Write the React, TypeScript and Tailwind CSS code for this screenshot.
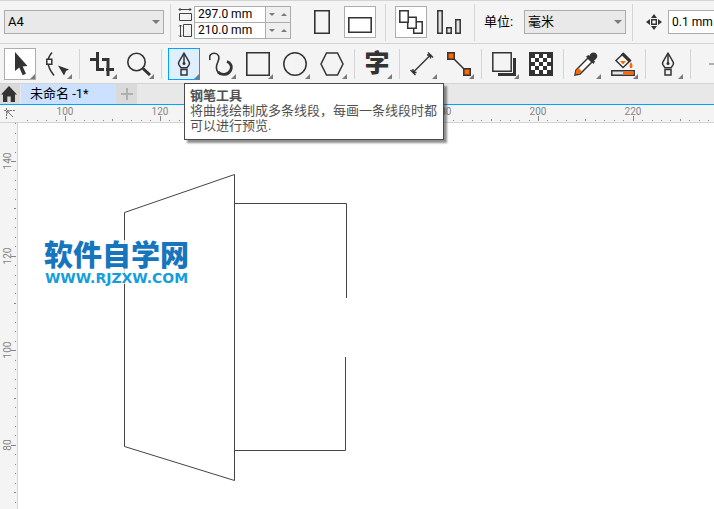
import React, { useEffect, useState } from "react";

const ink = "#333333";
const orange = "#ff6600";

function Separator({ wide = false }: { wide?: boolean }) {
    return <span className={`w-px h-[37px] flex-none bg-[#d4d4d4] ${wide ? "mx-[3px]" : ""}`} />;
}

function ToolSeparator() {
    return <span className="w-px h-[30px] mx-px flex-none bg-[#d4d4d4]" />;
}

type ToolProps = {
    label: string;
    state?: "idle" | "selected" | "hover";
    flyout?: boolean;
    children: React.ReactNode;
};

const toolStyle = {
    idle: "border-transparent",
    selected: "border-[#adadad] bg-white",
    hover: "border-[#00a2ff] bg-[#e0efff]",
};

function Tool({ label, state = "idle", flyout = true, children }: ToolProps) {
    return (
        <button
            type="button"
            aria-label={label}
            className={`relative w-8 h-8 flex-none flex items-center justify-center border ${toolStyle[state]}`}
        >
            {children}
            {flyout && (
                <svg className="absolute right-0 bottom-0 w-[5px] h-[5px]" viewBox="0 0 5 5">
                    <path d="M5 0V5H0Z" fill="#7a7a7a" />
                </svg>
            )}
        </button>
    );
}

function Icon({ children }: { children: React.ReactNode }) {
    return (
        <svg className="w-6 h-6 flex-none" viewBox="0 0 24 24" fill="none" stroke={ink} strokeWidth="2">
            {children}
        </svg>
    );
}

function PenIcon() {
    return (
        <Icon>
            <path d="M12 1L6.8 10.2Q6.2 11.5 7 12.8L9 15.8H15L17 12.8Q17.8 11.5 17.2 10.2Z" strokeWidth="1.5" strokeLinejoin="round" />
            <path d="M12 2V12" strokeWidth="1.5" />
            <circle cx="12" cy="11.5" r="1.5" fill={ink} stroke="none" />
            <path d="M9 17.5H15V23H9Z" strokeWidth="1.5" />
        </Icon>
    );
}

function SelectBox({ id, value, className }: { id: string; value: string; className: string }) {
    return (
        <span className={`relative flex-none h-6 ${className}`}>
            <select
                id={id}
                aria-label={id}
                defaultValue={value}
                className="block w-full h-full appearance-none border border-[#adadad] bg-[#e9e9e9] pl-[3px] pr-5 text-[13px] leading-5 text-black"
            >
                <option>{value}</option>
            </select>
            <svg className="absolute right-1 top-[10px] w-2 h-1 pointer-events-none" viewBox="0 0 8 4">
                <path d="M0 0H8L4 4Z" fill="#7a7a7a" />
            </svg>
        </span>
    );
}

function SizeInput({ label, value }: { label: string; value: string }) {
    return (
        <div className="flex h-[15px]">
            <input
                aria-label={label}
                defaultValue={value}
                className="w-[70px] h-full bg-white pl-[3px] text-[12px] leading-[15px] text-black outline-none"
            />
            <div className="flex border-l border-[#adadad] bg-[#efefef]">
                <button type="button" aria-label={`Decrease ${label}`} className="w-3 flex items-center justify-center">
                    <svg className="w-[6px] h-[3px]" viewBox="0 0 6 3"><path d="M0 0H6L3 3Z" fill="#7a7a7a" /></svg>
                </button>
                <button type="button" aria-label={`Increase ${label}`} className="w-3 flex items-center justify-center">
                    <svg className="w-[6px] h-[3px]" viewBox="0 0 6 3"><path d="M0 3H6L3 0Z" fill="#7a7a7a" /></svg>
                </button>
            </div>
        </div>
    );
}

function PropertyBar() {
    return (
        <div className="flex items-center gap-[6px] h-11 pl-1 border-t border-b border-[#d4d4d4] overflow-hidden">
            <SelectBox id="page-size" value="A4" className="w-40" />
            <Separator />
            <div className="flex flex-none gap-px">
                <svg className="w-4 h-[33px]" viewBox="0 0 16 33" fill="none" stroke="#444444">
                    <path d="M2 3.5H14M3.5 2L2 3.5L3.5 5M12.5 2L14 3.5L12.5 5" />
                    <path d="M2.5 7.5H14.5V14.5H2.5Z" />
                    <path d="M3.5 19V31M2 20.5L3.5 19L5 20.5M2 29.5L3.5 31L5 29.5M6.5 18.5H14.5V30.5H6.5Z" />
                </svg>
                <div className="border border-[#adadad]">
                    <SizeInput label="width" value="297.0 mm" />
                    <div className="h-px bg-[#adadad]" />
                    <SizeInput label="height" value="210.0 mm" />
                </div>
            </div>
            <div className="flex flex-none gap-[6px] pl-[9px]">
                <Tool label="纵向" flyout={false}>
                    <Icon><path d="M4.8 .8H19.2V23.2H4.8Z" strokeWidth="1.6" /></Icon>
                </Tool>
                <Tool label="横向" state="selected" flyout={false}>
                    <Icon><path d="M.8 7.8H23.2V22.2H.8Z" strokeWidth="1.6" /></Icon>
                </Tool>
            </div>
            <Separator wide />
            <Tool label="所有页面" state="selected" flyout={false}>
                <Icon>
                    <g strokeWidth="1.5" fill="white">
                        <path d="M14.7 11.7H23.2V23.2H14.7Z" />
                        <path d="M8.7 7.2H17.2V18.2H8.7Z" />
                        <path d="M.8 .8H9.2V12.2H.8Z" />
                    </g>
                </Icon>
            </Tool>
            <Tool label="当前页面" flyout={false}>
                <Icon>
                    <g strokeWidth="1.5" fill="#e4e4e4">
                        <path d="M.8 .8H5.2V23.2H.8Z" />
                        <path d="M9.8 17.8H14.2V23.2H9.8Z" />
                        <path d="M18.8 9.8H23.2V23.2H18.8Z" />
                    </g>
                </Icon>
            </Tool>
            <Separator wide />
            <label htmlFor="units" className="w-[34px] flex-none text-[13px] text-black whitespace-nowrap">单位:</label>
            <SelectBox id="units" value="毫米" className="w-[102px]" />
            <Separator />
            <svg className="w-4 h-4 ml-[7px] flex-none" viewBox="0 0 16 16" fill={ink}>
                <path d="M8 0L11 4H5ZM8 16L11 12H5ZM0 8L4 5V11ZM16 8L12 5V11Z" />
                <path d="M5.7 5.7H10.3V10.3H5.7Z" fill="white" stroke={ink} strokeWidth="1.4" />
            </svg>
            <input
                aria-label="微调距离"
                defaultValue="0.1 mm"
                className="w-20 h-6 flex-none border border-[#adadad] bg-white pl-[3px] text-[12px] text-black"
            />
        </div>
    );
}

function Toolbox() {
    return (
        <div className="flex items-center gap-[5px] h-10 pl-1 border-b border-[#d4d4d4] overflow-hidden">
            <Tool label="选择" state="selected">
                <Icon><path d="M7 0V19L11.3 15.5L14.7 23.2L18 21.8L14.7 14.5L19.5 14Z" fill={ink} stroke="none" /></Icon>
            </Tool>
            <Tool label="形状">
                <Icon>
                    <path d="M7 .5Q3 5 3 10Q3 16 9 23.5" strokeWidth="1.5" />
                    <path d="M1.8 7.2H6.8V12.2H1.8Z" fill="white" strokeWidth="1.5" />
                    <path d="M13 13.5L24 17.5L21 19L19 23.5Z" fill={ink} stroke="none" />
                </Icon>
            </Tool>
            <ToolSeparator />
            <Tool label="裁剪">
                <Icon><path d="M0 7.5H9M12 7.5H18V16M7.5 0V17.5H14M16 17.5H24M18 19V24" strokeWidth="3" /></Icon>
            </Tool>
            <Tool label="缩放">
                <Icon>
                    <circle cx="9.5" cy="10" r="8.7" strokeWidth="1.6" />
                    <path d="M16 16.5L23 23" strokeWidth="3" />
                </Icon>
            </Tool>
            <ToolSeparator />
            <Tool label="钢笔工具" state="hover"><PenIcon /></Tool>
            <Tool label="B 样条">
                <Icon>
                    <path d="M1 8C-.5 3 2.5 1 5.5 1.2C9.5 1.5 11 5 9 9.5C7 14 6.5 18 9.5 20.5" strokeWidth="1.6" />
                    <path d="M9 20C12 23.5 19 23.3 21.5 18.5C23.5 14.5 21.5 10.5 18 9.5" strokeWidth="2.8" />
                </Icon>
            </Tool>
            <Tool label="矩形"><Icon><path d="M.8 .8H23.2V23.2H.8Z" strokeWidth="1.6" /></Icon></Tool>
            <Tool label="椭圆形"><Icon><circle cx="12" cy="12" r="11.2" strokeWidth="1.5" /></Icon></Tool>
            <Tool label="多边形"><Icon><path d="M6.5 1H17.5L23 12L17.5 23H6.5L1 12Z" strokeWidth="1.5" /></Icon></Tool>
            <ToolSeparator />
            <Tool label="文本">
                <span className="text-[25px] leading-6 pt-px font-black text-[#333333]">字</span>
            </Tool>
            <ToolSeparator />
            <Tool label="平行度量">
                <Icon><path d="M3 20.5L20.5 3M.5 18L5.5 23M18 .5L23 5.5M3 17V20.5H6.5M17 3H20.5V6.5" strokeWidth="1.4" /></Icon>
            </Tool>
            <Tool label="连接器">
                <Icon>
                    <path d="M4 4L20 20" strokeWidth="1.6" />
                    <path d="M.8 .8H7.2V7.2H.8ZM16.8 16.8H23.2V23.2H16.8Z" fill={orange} strokeWidth="1.5" />
                </Icon>
            </Tool>
            <ToolSeparator />
            <Tool label="阴影">
                <Icon>
                    <path d="M6 22.5H22.5V6" strokeWidth="3" />
                    <path d="M.8 .8H19.2V19.2H.8Z" fill="#f4f4f4" strokeWidth="1.5" />
                </Icon>
            </Tool>
            <Tool label="透明度" flyout={false}>
                <Icon>
                    <path d="M0 0H24V24H0Z" fill={ink} stroke="none" />
                    {[0, 1, 2, 3, 4].map((row) =>
                        [0, 1, 2, 3, 4].map((col) =>
                            (row + col) % 2 === 1 ? (
                                <rect key={`${row}-${col}`} x={2 + col * 4} y={2 + row * 4} width="4" height="4" fill="white" stroke="none" />
                            ) : null
                        )
                    )}
                </Icon>
            </Tool>
            <ToolSeparator />
            <Tool label="颜色滴管">
                <Icon>
                    <path d="M14 6L2 18L1 23L6 22L18 10Z" fill="white" strokeWidth="1.5" />
                    <path d="M2 18.5L4.5 16L8 19.5L5.5 21.5L1.5 22.5Z" fill={orange} stroke="none" />
                    <path d="M12 4.5L14.5 3L15.5 4C16 1 19-.5 21.5 1C24.5 3 23.5 7 20 8.5L21 9.5L19.5 12Z" fill={ink} stroke="none" />
                </Icon>
            </Tool>
            <Tool label="交互式填充">
                <Icon>
                    <path d="M12.5 1.5L19.5 8.5L12 15.5L5 8.5Z" fill="white" strokeWidth="1.5" />
                    <path d="M11 1.5L19 9.5" strokeWidth="3" />
                    <path d="M9 9H15L12 12.5Z" fill={orange} stroke="none" />
                    <path d="M20 10C21.5 12 22 13.5 21 16H19C18 13.5 19 12 20 10Z" fill={orange} stroke="none" />
                    <path d="M.8 18.8H23.2V23.2H.8Z" fill="#e4e4e4" strokeWidth="1.5" />
                    <path d="M12 19.5H22.5V22.5H12Z" fill={orange} stroke="none" />
                </Icon>
            </Tool>
            <ToolSeparator />
            <Tool label="轮廓笔"><PenIcon /></Tool>
            <ToolSeparator />
            <button type="button" aria-label="自定义" className="w-9 h-8 flex-none flex items-center justify-center">
                <svg className="w-3 h-3" viewBox="0 0 12 12"><path d="M0 6H12M6 0V12" stroke="#b0b0b0" strokeWidth="2" /></svg>
            </button>
        </div>
    );
}

function DocumentTabs() {
    return (
        <div className="flex h-[21px] bg-[#e8e8e8] border-b border-[#00a2ff]">
            <button type="button" aria-label="主页" className="w-5 flex items-center justify-center bg-[#dadada]">
                <svg className="w-4 h-4 mr-[2px] flex-none" viewBox="0 0 16 16">
                    <path d="M8 0L16 8.5H14V16H9.7V10.5H6.3V16H2V8.5H0Z" fill={ink} />
                </svg>
            </button>
            <button type="button" className="w-[95px] ml-px pl-[9px] text-left text-[13px] leading-[18px] text-black bg-[#cce1ff] whitespace-nowrap">
                未命名 -1*
            </button>
            <button type="button" aria-label="新建文档" className="w-[21px] flex items-center justify-center bg-[#dadada]">
                <svg className="w-3 h-3" viewBox="0 0 12 12"><path d="M0 6H12M6 0V12" stroke="#b0b0b0" strokeWidth="2" /></svg>
            </button>
        </div>
    );
}

// One step is 2 mm, every tenth step carries a label.
const STEP = 9.46;

function makeSteps(origin: number, length: number) {
    const first = -Math.floor(origin / STEP);
    const last = Math.floor((length - origin) / STEP);
    return Array.from({ length: last - first + 1 }, (_, i) => first + i);
}

function tickLength(step: number) {
    if (step % 10 === 0) return 5;
    return step % 5 === 0 ? 2 : 1;
}

function HorizontalRuler({ length }: { length: number }) {
    return (
        <svg className="block flex-1 min-w-0 h-[17px]" fill="#858585" fontSize="10">
            {makeSteps(47, length).map((step) => {
                const x = Math.round(47 + step * STEP);
                const len = tickLength(step);
                return (
                    <g key={step}>
                        <rect x={x} y={16 - len} width="1" height={len} />
                        {step % 10 === 0 && <text x={x} y="10" textAnchor="middle">{100 + step * 2}</text>}
                    </g>
                );
            })}
        </svg>
    );
}

function VerticalRuler({ length }: { length: number }) {
    return (
        <svg className="block w-[18px] flex-none border-r border-[#d4d4d4]" fill="#858585" fontSize="10">
            {makeSteps(38, length).map((step) => {
                const y = Math.round(38 + step * STEP);
                const len = tickLength(step);
                return (
                    <g key={step}>
                        <rect x={16 - len} y={y} width={len} height="1" />
                        {step % 10 === 0 && (
                            <text transform={`translate(11 ${y}) rotate(-90)`} textAnchor="middle">{140 - step * 2}</text>
                        )}
                    </g>
                );
            })}
        </svg>
    );
}

function Watermark() {
    return (
        <div className="absolute left-[26px] top-[117px] text-center whitespace-nowrap bg-white/80">
            <p className="text-[29px] leading-8 font-black text-[#1675bd]">软件自学网</p>
            <p className="font-['DejaVu_Sans'] text-[14px] leading-3 font-bold text-[#159ddd]">WWW.RJZXW.COM</p>
        </div>
    );
}

function Canvas() {
    return (
        <div className="relative flex-1 min-w-0 bg-white overflow-hidden">
            <svg className="block w-full h-[380px]" fill="none" stroke="#444444" strokeWidth="1">
                <path d="M106.5 89.5L216.5 51.5V357.5L106.5 323.5Z" />
                <path d="M216.5 80.5H328.5V175M327.5 234V327.5H216.5" />
            </svg>
            <Watermark />
        </div>
    );
}

export default function App() {
    const [size, setSize] = useState({ width: window.innerWidth, height: window.innerHeight });

    useEffect(() => {
        const onResize = () => setSize({ width: window.innerWidth, height: window.innerHeight });
        window.addEventListener("resize", onResize);
        return () => window.removeEventListener("resize", onResize);
    }, []);

    return (
        <div className="relative min-h-screen flex flex-col overflow-hidden bg-[#f4f4f4] font-[Roboto,'Noto_Sans_CJK_SC',sans-serif]">
            <PropertyBar />
            <Toolbox />
            <DocumentTabs />
            <div className="flex h-[18px] border-b border-[#d4d4d4]">
                <svg className="w-[18px] h-[17px] flex-none" viewBox="0 0 18 17" fill="none" stroke="#777777">
                    <path d="M4 5.5H15" strokeDasharray="2 1" />
                    <path d="M6.5 3V15" strokeDasharray="2 1" />
                    <path d="M7 6L13 12M7 9V6H10" />
                </svg>
                <HorizontalRuler length={size.width - 18} />
            </div>
            <div className="flex flex-1">
                <VerticalRuler length={size.height - 123} />
                <Canvas />
            </div>

            {/* Tooltip of the pen tool */}
            <div role="tooltip" className="absolute left-[184px] top-[83px] w-[260px] h-[57px] pt-1 pl-[5px] border border-[#4a4a4a] bg-white text-[13px] leading-[15px] text-[#505050] shadow-[3px_3px_2px_#00000070]">
                <p className="font-bold">钢笔工具</p>
                <p className="whitespace-nowrap">将曲线绘制成多条线段，每画一条线段时都</p>
                <p>可以进行预览.</p>
            </div>
        </div>
    );
}
